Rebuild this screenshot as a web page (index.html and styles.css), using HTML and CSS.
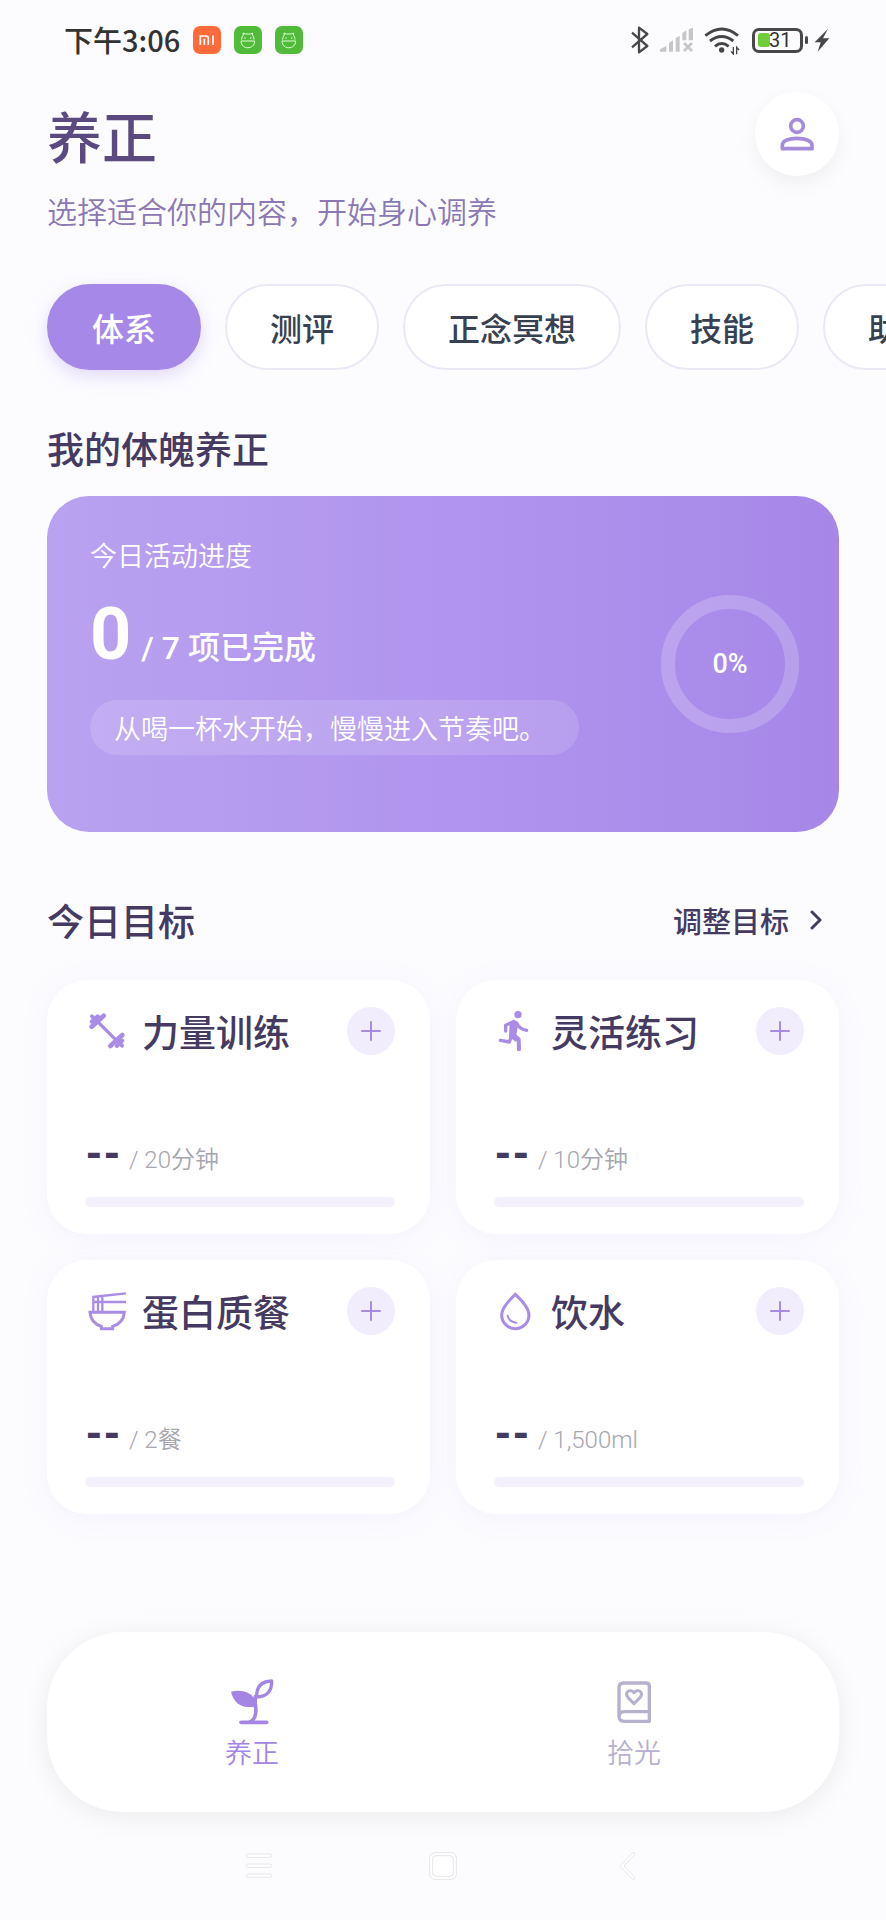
FILE: index.html
```html
<!DOCTYPE html>
<html lang="zh-CN">
<head>
<meta charset="utf-8">
<meta name="viewport" content="width=device-width, initial-scale=1">
<title>养正</title>
<link rel="stylesheet" href="styles.css">
</head>
<body>
<svg class="sprite" aria-hidden="true">
  <symbol id="plus" viewBox="0 0 20 20"><path d="M10 1v18M1 10h18" fill="none" stroke="currentColor" stroke-width="2" stroke-linecap="round"/></symbol>
  <symbol id="bot" viewBox="0 0 84 84"><g fill="none" stroke="#e4ffd8" stroke-width="3" stroke-linejoin="round"><path d="M23 41c0-7 3-11 5-14l-1-6 7 3h15l7-3-1 6c2 3 5 7 5 14"/><path d="M21 45h41c0 27-41 27-41 0z"/></g><circle cx="33" cy="36" r="2" fill="#fff"/><circle cx="50" cy="36" r="2" fill="#fff"/></symbol>
</svg>
<div class="screen">
  <div class="status">
    <div class="status-side">
      <span class="clock">下午3:06</span>
      <div class="apps">
        <svg class="app app-mi" viewBox="0 0 84 84"><path d="M22 57V30h17q7 0 7 7v20M34 38v19M60 28v29" fill="none" stroke="#fff" stroke-width="5"/></svg>
        <svg class="app app-bot"><use href="#bot"/></svg>
        <svg class="app app-bot"><use href="#bot"/></svg>
      </div>
    </div>
    <div class="status-side status-right">
      <svg width="20" height="30" viewBox="84 76 60 90"><path d="M90 99l46 40-25 19V84l25 19-46 40" fill="none" stroke="#484848" stroke-width="7" stroke-linejoin="round"/></svg>
      <svg class="sig" width="36" height="30" viewBox="170 76 108 90"><path d="M173 156v-7l19-10v17zM200 156v-26l12-8v34zM220 156v-41l12-7v48zM240 122v-22l12-8v30zM259 122V89l13-5v38z" fill="#c6c6c6"/><path d="M245 130l24 24M269 130l-24 24" stroke="#c6c6c6" stroke-width="8"/></svg>
      <svg class="wifi" width="36" height="30" viewBox="310 76 108 90"><g fill="none" stroke="#454545" stroke-width="9"><path d="M314 108q50-40 98 0"/><path d="M328 124q35-27 70 0"/><path d="M343 140q20-17 41 0"/><path d="M398 142v21l-7-8M408 164v-21l7 8" stroke-width="4"/></g><circle cx="363" cy="151" r="8" fill="#454545"/></svg>
      <div class="battery"><span class="charge"></span><span class="pct">31</span></div>
      <span class="nub"></span>
      <svg width="16" height="24" viewBox="641 84 48 72"><path d="M683 86l-40 41h18l-9 28 35-40h-19z" fill="#484848"/></svg>
    </div>
  </div>

  <header class="header">
    <div class="header-row">
      <h1>养正</h1>
      <button class="avatar" aria-label="个人中心"><svg width="40" height="40" viewBox="532 340 120 120"><g fill="none" stroke="#a58cda" stroke-width="11" stroke-linejoin="round"><circle cx="592" cy="376" r="19"/><path d="M548 444v-10c0-13 18-21 44-21s45 8 45 21v10z"/></g></svg></button>
    </div>
    <p class="subtitle">选择适合你的内容，开始身心调养</p>
  </header>

  <nav class="tabs" aria-label="分类">
    <button class="tab tab-on">体系</button>
    <button class="tab">测评</button>
    <button class="tab">正念冥想</button>
    <button class="tab">技能</button>
    <button class="tab">助眠</button>
  </nav>

  <main class="main">
    <h2>我的体魄养正</h2>
    <section class="progress">
      <div class="progress-body">
        <div class="progress-label">今日活动进度</div>
        <div class="count"><b>0</b><span>/ 7 项已完成</span></div>
        <div class="tip">从喝一杯水开始，慢慢进入节奏吧。</div>
      </div>
      <div class="ring">0%</div>
    </section>

    <div class="section-row">
      <h2>今日目标</h2>
      <button class="adjust">调整目标<svg width="14" height="22" viewBox="0 0 14 22"><path d="M3 3l8 8-8 8" fill="none" stroke="currentColor" stroke-width="3" stroke-linecap="round" stroke-linejoin="round"/></svg></button>
    </div>

    <section class="goals">
      <article class="goal">
        <div class="goal-head">
          <svg class="goal-icon" viewBox="135 387 132 132"><g fill="none" stroke="#a98ce6" stroke-width="14" stroke-linecap="round"><path d="M178 430l48 48" stroke-width="10"/><path d="M155 440l36-33"/><path d="M155 425l18-16M156 409l12 12" stroke-width="12"/><path d="M211 498l36-33"/><path d="M230 498l17-16M235 485l11 12" stroke-width="12"/></g></svg>
          <h3>力量训练</h3>
          <button class="add" aria-label="添加力量训练"><svg><use href="#plus"/></svg></button>
        </div>
        <div class="amount"><b>--</b><span>/ 20分钟</span></div>
        <div class="bar"></div>
      </article>
      <article class="goal">
        <div class="goal-head">
          <svg class="goal-icon" viewBox="159 147 132 132"><circle cx="231" cy="164" r="11" fill="#a98ce6"/><path d="M206 186l15-7 11 12-6 34 10 10-12 10-20-15z" fill="#a98ce6"/><g fill="none" stroke="#a98ce6" stroke-width="10" stroke-linecap="round" stroke-linejoin="round"><path d="M194 213v-17l23-11"/><path d="M226 188q10 20 31 23"/><path d="M215 222l18 16 1 30" stroke-width="12"/><path d="M178 241l27 5 9-26"/></g></svg>
          <h3>灵活练习</h3>
          <button class="add" aria-label="添加灵活练习"><svg><use href="#plus"/></svg></button>
        </div>
        <div class="amount"><b>--</b><span>/ 10分钟</span></div>
        <div class="bar"></div>
      </article>
      <article class="goal">
        <div class="goal-head">
          <svg class="goal-icon" viewBox="135 114 132 132"><g fill="none" stroke="#a98ce6" stroke-width="7"><path d="M157 138l101-11M157 153h101M160 136v46M174 136v46M187 134v48"/><path d="M150 184h103c-2 22-15 36-35 42v7h-34v-7c-20-6-32-20-34-42z" stroke-width="9"/></g></svg>
          <h3>蛋白质餐</h3>
          <button class="add" aria-label="添加蛋白质餐"><svg><use href="#plus"/></svg></button>
        </div>
        <div class="amount"><b>--</b><span>/ 2餐</span></div>
        <div class="bar"></div>
      </article>
      <article class="goal">
        <div class="goal-head">
          <svg class="goal-icon" viewBox="159 114 132 132"><g fill="none" stroke="#a98ce6" stroke-width="9"><path d="M223 130c-13 12-41 38-41 62a41 41 0 0 0 82 0c0-24-28-50-41-62z"/><path d="M200 194q4 19 26 21" stroke-width="6" stroke-linecap="round"/></g></svg>
          <h3>饮水</h3>
          <button class="add" aria-label="添加饮水"><svg><use href="#plus"/></svg></button>
        </div>
        <div class="amount"><b>--</b><span>/ 1,500ml</span></div>
        <div class="bar"></div>
      </article>
    </section>
  </main>

  <nav class="dock" aria-label="主导航">
    <a href="#" class="dock-item dock-on">
      <svg viewBox="144 176 144 144"><path d="M153 217c30-8 61 2 72 24l-3 21c-34 6-60-8-69-45z" fill="currentColor"/><g fill="none" stroke="currentColor" stroke-width="11" stroke-linecap="round" stroke-linejoin="round"><path d="M226 232c-3 20 4 34 1 50-2 14-8 22-17 26"/><path d="M230 233c-1-32 15-47 45-48 1 29-13 47-45 48z" stroke-width="10"/><path d="M183 309h77"/></g></svg>
      <span>养正</span>
    </a>
    <a href="#" class="dock-item">
      <svg viewBox="1289 176 144 144"><g fill="none" stroke="currentColor" stroke-width="10" stroke-linejoin="round"><path d="M1330 191h67q10 0 10 10v105h-76q-15 0-15-15v-86q0-14 14-14z"/><path d="M1317 291q0-14 14-14h75"/><path d="M1361 253l-18-18c-12-16 6-29 18-15 12-14 30-1 18 15z" stroke-width="9"/></g></svg>
      <span>拾光</span>
    </a>
  </nav>

  <div class="system">
    <button aria-label="最近任务"><svg viewBox="0 0 90 90"><g fill="#fff" stroke="#e6e6e8" stroke-width="3"><rect x="7" y="9" width="76" height="10" rx="5"/><rect x="7" y="39" width="76" height="10" rx="5"/><rect x="7" y="69" width="76" height="10" rx="5"/></g></svg></button>
    <button aria-label="主屏幕"><svg viewBox="0 0 90 90"><g fill="#fff" stroke="#e6e6e8" stroke-width="3"><rect x="5" y="5" width="80" height="80" rx="16"/><rect x="14" y="14" width="62" height="62" rx="10"/></g></svg></button>
    <button aria-label="返回"><svg viewBox="0 0 90 90"><path d="M62 5q6-2 7 5L36 45l33 35q-1 7-7 5L23 45z" fill="#fff" stroke="#e6e6e8" stroke-width="3" stroke-linejoin="round"/></svg></button>
  </div>
</div>
</body>
</html>
```

FILE: styles.css
```css
* { box-sizing: border-box; }

body {
  margin: 0;
  background: #fcfcff;
  color: #453a62;
  font-family: Roboto, "Noto Sans CJK SC", sans-serif;
}

h1, h2, h3, p { margin: 0; }

button {
  font: inherit;
  color: inherit;
  background: none;
  border: 0;
  padding: 0;
}

svg { display: block; flex: none; }
.sprite { position: absolute; width: 0; height: 0; }

.screen {
  min-height: 100vh;
  display: flex;
  flex-direction: column;
  overflow: hidden;
}

h1, h2, h3, .clock, .progress-label, .tip, .adjust, .dock-item {
  font-family: "Noto Sans CJK SC", sans-serif;
}

.status {
  display: flex;
  justify-content: space-between;
  align-items: center;
  height: 80px;
  padding: 0 56px 0 64px;
}
.status-side { display: flex; align-items: center; }
.clock { font-size: 29px; line-height: 38px; padding-bottom: 2px; font-weight: 500; color: #333; }
.apps { display: flex; gap: 13px; margin-left: 13px; }
.app { width: 28px; height: 28px; border-radius: 7px; }
.app-mi { background: #ff6a3a; }
.app-bot { background: #4fbb39; }
.sig, .wifi { margin-left: 9px; }
.wifi { margin-right: 12px; }
.battery {
  display: flex;
  align-items: center;
  width: 51px;
  height: 25px;
  border: 3px solid #484848;
  border-radius: 7px;
  padding-left: 3px;
}
.charge { width: 12px; height: 14px; border-radius: 3px; background: #70cc3b; }
.pct { font-size: 20px; line-height: 20px; color: #333; margin-left: -1px; }
.nub { width: 3px; height: 8px; border-radius: 2px; background: #484848; margin: 0 6px 0 2px; }

.header { padding: 12px 47px 0; }
.header-row { display: flex; justify-content: space-between; align-items: center; }
h1 { font-size: 55px; line-height: 84px; font-weight: 500; color: #5b4a80; }
.avatar {
  display: grid;
  place-items: center;
  width: 84px;
  height: 84px;
  border-radius: 50%;
  background: #fff;
  box-shadow: 0 8px 20px rgba(0, 0, 0, 0.05);
}
.subtitle { margin-top: 17px; font-size: 30px; line-height: 40px; font-weight: 350; color: #8b78b4; }

.tabs { display: flex; gap: 24px; padding: 51px 0 0 47px; }
.tab {
  flex: none;
  height: 86px;
  padding: 0 43px;
  border: 2px solid #ebe8f5;
  border-radius: 43px;
  background: #fff;
  color: #374151;
  font-size: 32px;
  font-weight: 500;
}
.tab-on {
  border-color: #a688e8;
  background: #a688e8;
  color: #fff;
  box-shadow: 0 6px 18px rgba(166, 136, 232, 0.3);
}

.main { padding: 54px 47px 80px; }
h2 { font-size: 37px; line-height: 48px; font-weight: 500; color: #453a62; }

.progress {
  display: flex;
  align-items: center;
  gap: 82px;
  margin-top: 24px;
  padding: 39px 40px 39px 43px;
  min-height: 336px;
  border-radius: 42px;
  background: linear-gradient(90deg, #b9a2f0, #b093ee 55%, #a687e8);
  color: #fff;
}
.progress-body { flex: 1; align-self: flex-start; }
.progress-label { font-size: 27px; line-height: 40px; font-weight: 350; }
.count { display: flex; align-items: baseline; gap: 10px; margin-top: 15px; line-height: 90px; }
.count b { font-size: 72px; font-weight: 700; }
.count span { font-size: 32px; font-weight: 500; }
.tip {
  margin-top: 7px;
  padding: 0 24px;
  border-radius: 28px;
  background: rgba(255, 255, 255, 0.14);
  font-size: 27px;
  line-height: 55px;
  font-weight: 350;
}
.ring {
  display: grid;
  place-items: center;
  width: 138px;
  height: 138px;
  border: 14px solid rgba(255, 255, 255, 0.2);
  border-radius: 50%;
  font-size: 27px;
  font-weight: 500;
}

.section-row { display: flex; justify-content: space-between; align-items: center; margin-top: 64px; }
.adjust { display: flex; align-items: center; gap: 20px; padding-right: 16px; font-size: 29px; line-height: 48px; font-weight: 500; }

.goals { display: grid; grid-template-columns: 1fr 1fr; gap: 26px; margin-top: 36px; }
.goal {
  padding: 27px 35px 27px 38px;
  border-radius: 40px;
  background: #fff;
  box-shadow: 0 4px 28px rgba(140, 110, 220, 0.08);
}
.goal-head { display: flex; align-items: center; gap: 13px; }
.goal-icon { width: 44px; height: 44px; }
h3 { flex: 1; font-size: 37px; line-height: 48px; font-weight: 500; }
.add {
  display: grid;
  place-items: center;
  width: 48px;
  height: 48px;
  border-radius: 50%;
  background: #f1edfc;
  color: #a68bdf;
}
.add svg { width: 20px; height: 20px; }
.amount { display: flex; align-items: baseline; gap: 8px; margin-top: 80px; line-height: 40px; }
.amount b { font-size: 40px; font-weight: 900; }
.amount span { font-size: 24px; font-weight: 350; color: #a6a6ae; }
.bar { height: 10px; margin-top: 17px; border-radius: 5px; background: #f4f1fd; }

.dock {
  display: flex;
  margin: auto 47px 0;
  padding: 46px 14px 42px;
  border-radius: 76px;
  background: #fff;
  box-shadow: 0 4px 28px rgba(0, 0, 0, 0.07);
}
.dock-item {
  flex: 1;
  display: flex;
  flex-direction: column;
  align-items: center;
  gap: 8px;
  color: #b8b0cf;
  font-size: 27px;
  line-height: 36px;
  font-weight: 350;
  text-decoration: none;
}
.dock-item svg { width: 48px; height: 48px; }
.dock-on { color: #a585e4; }

.system { display: flex; justify-content: center; align-items: center; gap: 154px; height: 108px; }
.system svg { width: 30px; height: 30px; }
```
